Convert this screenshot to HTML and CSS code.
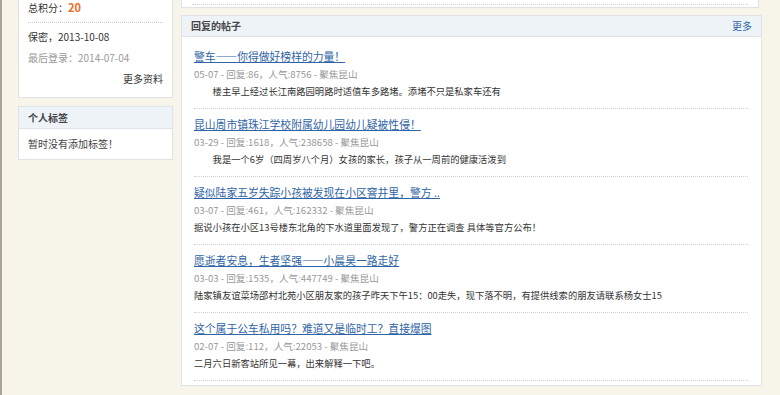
FILE: index.html
```html
<!DOCTYPE html>
<html lang="zh-CN">
<head>
  <meta charset="UTF-8">
  <title>回复的帖子</title>
  <link rel="stylesheet" href="styles.css">
</head>
<body>
  <div class="page">
    <div class="side">
      <div class="box box-cut">
        <div class="score">总积分：<b>20</b></div>
        <div class="info">保密，2013-10-08</div>
        <div class="info last-login">最后登录：2014-07-04</div>
        <div class="info more-info"><a href="#">更多资料</a></div>
      </div>

      <div class="box tags">
        <div class="box-head">个人标签</div>
        <div class="tags-body">暂时没有添加标签！</div>
      </div>
    </div>

    <div class="main">
      <div class="top-stub"><div class="stub-line"></div></div>

      <div class="box replies">
        <div class="box-head">
          <span>回复的帖子</span>
          <a href="#" class="head-more">更多</a>
        </div>
        <ul class="post-list">
          <li class="post">
            <a href="#" class="post-title">警车——你得做好榜样的力量！</a>
            <div class="post-meta">05-07 - 回复:86，人气:8756 - 聚焦昆山</div>
            <div class="post-text">　　楼主早上经过长江南路园明路时适值车多路堵。添堵不只是私家车还有</div>
          </li>
          <li class="post">
            <a href="#" class="post-title">昆山周市镇珠江学校附属幼儿园幼儿疑被性侵！</a>
            <div class="post-meta">03-29 - 回复:1618，人气:238658 - 聚焦昆山</div>
            <div class="post-text">　　我是一个6岁（四周岁八个月）女孩的家长，孩子从一周前的健康活泼到</div>
          </li>
          <li class="post">
            <a href="#" class="post-title">疑似陆家五岁失踪小孩被发现在小区窨井里，警方 ..</a>
            <div class="post-meta">03-07 - 回复:461，人气:162332 - 聚焦昆山</div>
            <div class="post-text">据说小孩在小区13号楼东北角的下水道里面发现了，警方正在调查 具体等官方公布！</div>
          </li>
          <li class="post">
            <a href="#" class="post-title">愿逝者安息，生者坚强——小晨昊一路走好</a>
            <div class="post-meta">03-03 - 回复:1535，人气:447749 - 聚焦昆山</div>
            <div class="post-text">陆家镇友谊菜场邵村北苑小区朋友家的孩子昨天下午15：00走失，现下落不明，有提供线索的朋友请联系杨女士15</div>
          </li>
          <li class="post">
            <a href="#" class="post-title">这个属于公车私用吗？难道又是临时工？直接爆图</a>
            <div class="post-meta">02-07 - 回复:112，人气:22053 - 聚焦昆山</div>
            <div class="post-text">二月六日新客站所见一幕，出来解释一下吧。</div>
          </li>
        </ul>
      </div>
    </div>
  </div>
</body>
</html>
```

FILE: styles.css
```css
* {
  margin: 0;
  padding: 0;
  box-sizing: border-box;
}

body {
  min-height: 100vh;
  background-color: #f7f5e9;
  border-left: 2px solid #aaa59a;
  font-family: "Noto Sans CJK SC", "Noto Sans", sans-serif;
  color: #333;
}

a {
  text-decoration: none;
}

.page {
  display: flex;
  gap: 8px;
  padding-left: 16px;
  width: 763px;
}

/* left column */
.side {
  width: 155px;
  flex-shrink: 0;
}

.box {
  background-color: #fff;
  border: 1px solid #dfe3e8;
}

.box-cut {
  border-top: none;
  padding: 0 9px 8px;
}

.score {
  font-size: 10px;
  line-height: 15px;
  padding-bottom: 7px;
  border-bottom: 1px dotted #c8c8c8;
}

.score b {
  color: #f26a21;
  font-size: 11px;
}

.info {
  font-size: 10px;
  line-height: 20px;
  margin-top: 4px;
}

.last-login {
  color: #9a9a9a;
  margin-top: 1px;
}

.more-info {
  text-align: right;
  margin-top: 1px;
}

.more-info a {
  color: #333;
}

.tags {
  margin-top: 8px;
}

.box-head {
  display: flex;
  justify-content: space-between;
  height: 22px;
  line-height: 21px;
  padding: 0 9px;
  background-color: #eef3f8;
  border-bottom: 1px solid #dde4ec;
  font-size: 10px;
  font-weight: 700;
  color: #444;
}

.tags-body {
  font-size: 10px;
  line-height: 18px;
  padding: 6px 9px;
  color: #444;
}

/* right column */
.main {
  width: 581px;
  flex-shrink: 0;
}

.top-stub {
  height: 8px;
  margin-right: 3px;
  background-color: #fff;
  border: 1px solid #dfe3e8;
  border-top: none;
  padding: 0 10px;
}

.stub-line {
  height: 5px;
  border-bottom: 1px dotted #cfcfcf;
}

.replies {
  margin-top: 7px;
}

.replies .box-head {
  height: 21px;
  line-height: 20px;
}

.head-more {
  color: #2f64a6;
  font-weight: 400;
}

.post-list {
  list-style: none;
  padding: 4px 13px 4px 12px;
}

.post {
  padding: 6px 0 8px;
  border-bottom: 1px dotted #cfcfcf;
}

.post-title {
  display: block;
  font-size: 10.8px;
  line-height: 18px;
  color: #2f64a6;
  text-decoration: underline;
}

.post-meta {
  font-size: 9.6px;
  line-height: 18px;
  color: #999;
}

.post-text {
  font-size: 9.3px;
  line-height: 17px;
  color: #333;
  white-space: nowrap;
  overflow: hidden;
}
```
